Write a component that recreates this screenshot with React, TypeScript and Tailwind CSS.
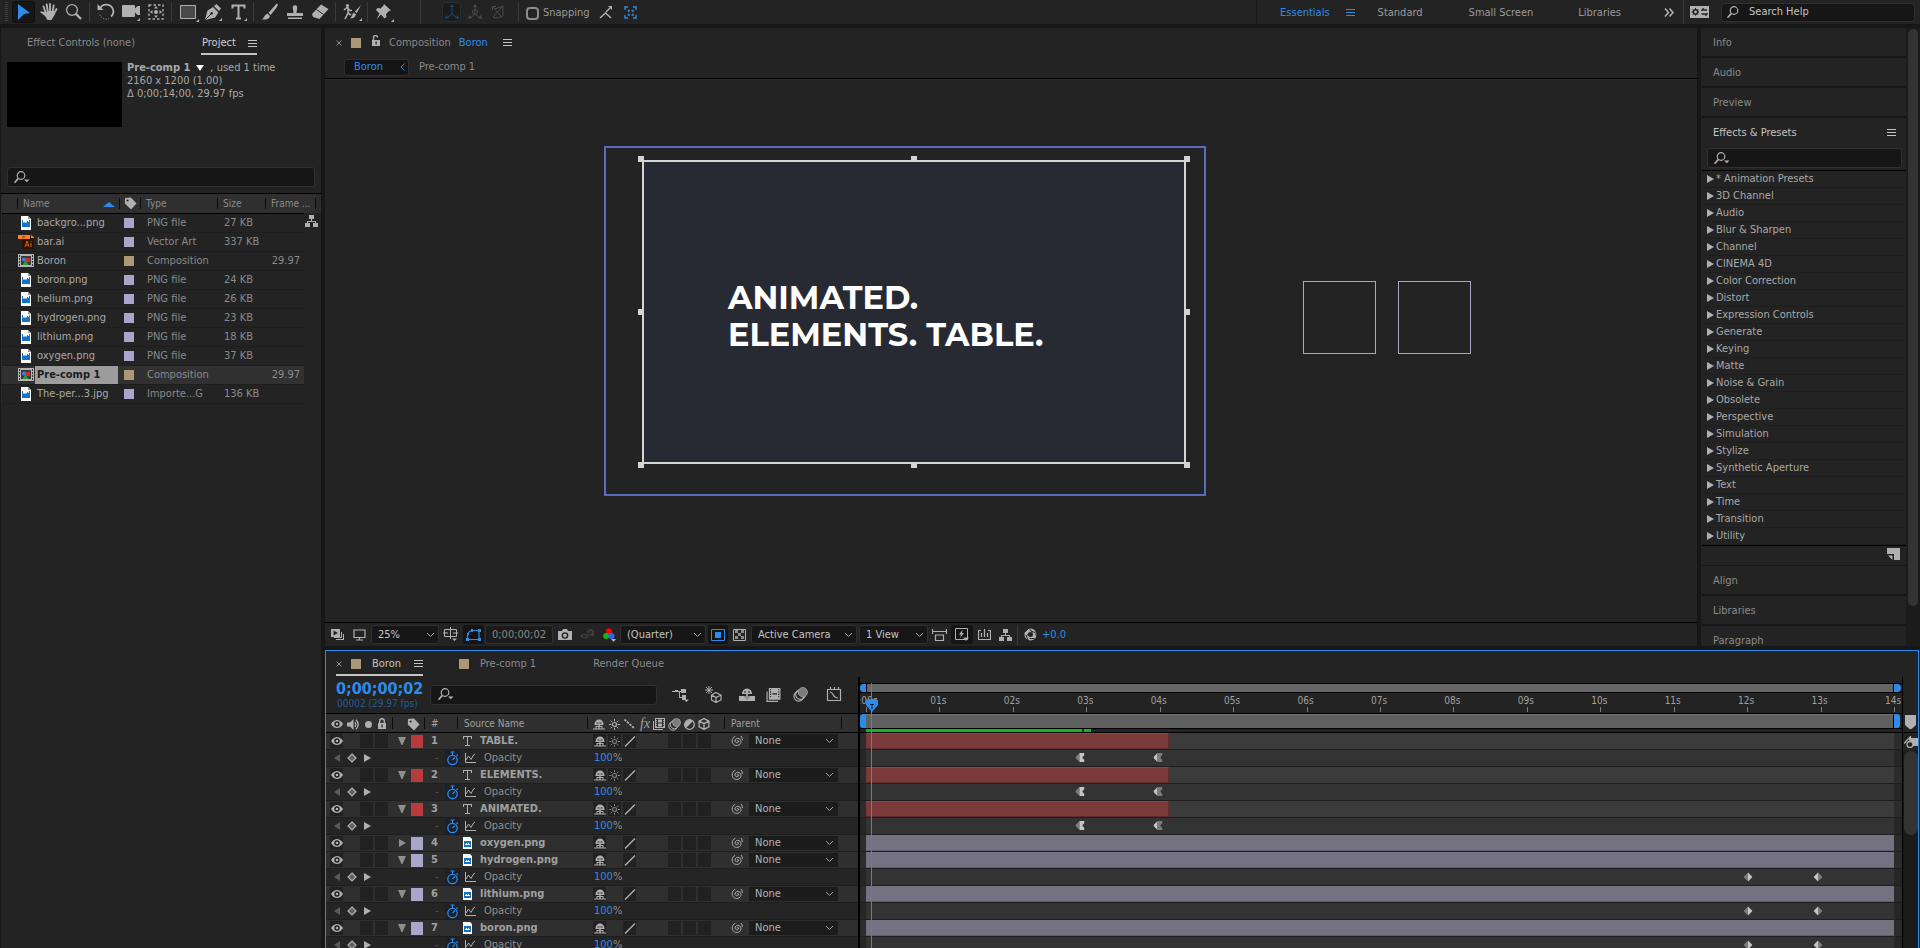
import React from "react";

type P = { children?: React.ReactNode };

const BLUE = "#2d8ceb";
const GREY = "#b0b0b0";

/* ---------- icons ---------- */

function Ico({ w = 16, h = 16, vb, c = GREY, children }: P & { w?: number; h?: number; vb?: string; c?: string }) {
  return (
    <svg width={w} height={h} viewBox={vb ?? `0 0 ${w} ${h}`} fill={c} stroke="none" color={c} aria-hidden="true" className="shrink-0">
      {children}
    </svg>
  );
}

const line = { fill: "none", stroke: "currentColor", strokeWidth: 1 };

const Hamburger = ({ c = "#c4c4c4" }: { c?: string }) => (
  <Ico w={9} h={7} c={c}>
    <path d="M0 0h9v1H0zM0 3h9v1H0zM0 6h9v1H0z" />
  </Ico>
);
const Chevron = () => (
  <Ico w={9} h={6} c="#a0a0a0">
    <path d="M1 1l3.5 3.5L8 1" {...line} />
  </Ico>
);
const Loupe = ({ menu = true }: { menu?: boolean }) => (
  <Ico w={18} h={13}>
    <circle cx="8" cy="4.500" r="3.800" {...line} strokeWidth={1.200} />
    <path d="M5.400 7.400L1.500 11.800" {...line} strokeWidth={1.600} />
    {menu && <path d="M11 8.500h5.500l-2.700 2.800z" />}
  </Ico>
);
const Eye = () => (
  <Ico w={12} h={8}>
    <path d="M0 4C2 1 4 0 6 0s4 1 6 4C10 7 8 8 6 8S2 7 0 4z" />
    <circle cx="6" cy="4" r="2.700" fill="#1d1d1d" />
    <circle cx="6" cy="4" r="1.300" />
  </Ico>
);
const Speaker = () => (
  <Ico w={13} h={11}>
    <path d="M0 3.500h3L6.500 0v11L3 7.500H0z" />
    <path d="M8 3q1.500 2.500 0 5M9 .8q4.500 4.700 0 9.400" {...line} strokeWidth={1.300} />
  </Ico>
);
const Lock = ({ open = false }: { open?: boolean }) => (
  <Ico w={10} h={12}>
    <path d="M1 5h8v6H1z" />
    <path d={open ? "M2.500 5V2.500a2 2 0 0 1 4 0" : "M2.700 5V3a2.300 2.300 0 0 1 4.600 0v2"} {...line} strokeWidth={1.400} />
    <path d="M4.500 6.500h1.200v3H4.500z" fill="#222" />
  </Ico>
);
const Tag = () => (
  <Ico w={13} h={13}>
    <path d="M1 1l6-.5 5.500 6-5.500 6L.8 6.500z" />
    <circle cx="3.600" cy="3.500" r="1.100" fill="#2b2b2b" />
  </Ico>
);
const Shy = () => (
  <Ico w={12} h={11}>
    <path d="M1.500 6V5.500a4.500 5 0 0 1 9 0V6z" />
    <path d="M3.500 3.500h2v1h-2zM6.500 3.500h2v1h-2z" fill="#232323" />
    <path d="M5.300 6h1.400v4H5.300zM2.500 7h7v1h-7zM0 9.500h12v1H0zM2.500 7h1v3h-1zM8.500 7h1v3h-1z" />
  </Ico>
);
const Sun = ({ c = GREY }: { c?: string }) => (
  <Ico w={11} h={11} c={c}>
    <circle cx="5.500" cy="5.500" r="2" {...line} strokeWidth={1.200} />
    <path d="M5.500 0v2.300M5.500 8.700V11M0 5.500h2.300M8.700 5.500H11M1.600 1.600l1.600 1.600M7.800 7.800l1.600 1.600M9.400 1.600L7.800 3.200M3.200 7.800L1.600 9.400" {...line} />
  </Ico>
);
const Slash = () => (
  <Ico w={12} h={11}>
    <path d="M1 10.500L11 .5" {...line} strokeWidth={1.400} />
  </Ico>
);
const Dots = () => (
  <Ico w={11} h={10}>
    <path d="M.5 .5l10 9" {...line} strokeWidth={1.800} strokeDasharray="2.400 1" />
  </Ico>
);
const Film = () => (
  <Ico w={12} h={12}>
    <path d="M0 3h1v8h9v1H0zM2 0h10v10H2z" />
    <path d="M4 1h6v8H4z" fill="#2b2b2b" />
    <path d="M3 1h1v1H3zM3 3h1v1H3zM3 5h1v1H3zM3 7h1v1H3zM10 1h1v1h-1zM10 3h1v1h-1zM10 5h1v1h-1zM10 7h1v1h-1z" fill="#2b2b2b" />
    <path d="M5 1.500h4v3H5zM5 5.500h4v3H5z" />
  </Ico>
);
const Blur = ({ s = 13 }: { s?: number }) => (
  <Ico w={s} h={s} vb="0 0 13 13">
    <circle cx="5" cy="8" r="4.200" {...line} />
    <circle cx="6.500" cy="6.500" r="4.200" {...line} />
    <circle cx="8.500" cy="4.500" r="4" fill="#7c7c7c" stroke="#9c9c9c" strokeWidth={0.800} />
  </Ico>
);
const Adjust = () => (
  <Ico w={11} h={11}>
    <circle cx="5.500" cy="5.500" r="4.800" {...line} strokeWidth={1.300} />
    <path d="M9 2A5 5 0 0 0 2 9z" />
  </Ico>
);
const Cube = ({ s = 12 }: { s?: number }) => (
  <Ico w={s} h={s} vb="0 0 11 11">
    <path d="M5.500 .6l4.500 2.300v5.200L5.500 10.400 1 8.100V2.900zM1 2.900l4.500 2.300L10 2.900M5.500 5.200v5.200" {...line} strokeWidth={1.200} />
  </Ico>
);
const Swirl = () => (
  <Ico w={12} h={12}>
    <path d="M6.200 6.400C5.600 5.400 7.600 5 7.700 6.300 7.800 8 4.500 8.400 4.100 6.300 3.700 3.900 6.200 2.700 8.200 3.700 10.800 5 10.400 8.600 8 9.900 5 11.500 1.400 9.600 1.200 6.200 1.100 4 2.300 2.200 4.200 1.300M10 1q1.400 1.500 1.300 4" {...line} />
  </Ico>
);
const Stopwatch = () => (
  <Ico w={13} h={15} c={BLUE}>
    <circle cx="6.500" cy="9" r="4.700" {...line} strokeWidth={1.300} />
    <path d="M4.500 1h4M6.500 1v3M10.500 3.500l1.300 1.300M6.500 9l2.500-2.500" {...line} strokeWidth={1.200} />
  </Ico>
);
const GraphIcon = () => (
  <Ico w={12} h={11}>
    <path d="M1.500 0v9.500H12M2 7l2.500-4 2.500 3.500L9.500 2 11 1" {...line} />
  </Ico>
);
const Tri = ({ dir, c = GREY }: { dir: "r" | "l" | "d"; c?: string }) => (
  <Ico w={8} h={8} c={c}>
    <path d={dir === "r" ? "M1 0v8l7-4z" : dir === "l" ? "M7 0v8L1 4z" : "M0 0h8L4.500 8h-1z"} />
  </Ico>
);
const KeyDiamond = () => (
  <Ico w={10} h={10}>
    <path d="M5 1l4 4-4 4-4-4z" fill="#5f5f5f" stroke="#b0b0b0" strokeWidth={1.200} />
  </Ico>
);
const PngIcon = () => (
  <Ico w={10} h={14}>
    <path d="M0 0h7l3 3v11H0z" fill="#fff" />
    <path d="M7 0v3h3z" fill="#9a9a9a" />
    <path d="M1 4h1v2l1 1 1-1 1 1 1-1V5h1v1h1V4h1v7H1z" fill="#1473c8" />
  </Ico>
);
const PngSmall = () => (
  <Ico w={9} h={12}>
    <path d="M0 0h7l2 2v10H0z" fill="#fff" />
    <path d="M1 4h7v6H1z" fill="#1473c8" />
    <path d="M2 8V7h1V6h1v1h1V6h1v1h1v1z" fill="#fff" />
  </Ico>
);
const AiIcon = () => (
  <Ico w={16} h={14}>
    <path d="M4 1h12v13H4z" fill="#2a1205" />
    <path d="M0 0h12v4H0zM13 0l3 2v1h-3z" fill="#ff7f18" />
    <path d="M4 1.500h3v1H4z" fill="#7a3400" />
    <path d="M7 12l2-6 2 6M7.800 10h2.500M13 8v4M13 6v1" {...line} stroke="#d7600d" />
  </Ico>
);
const CompIcon = () => (
  <Ico w={16} h={13}>
    <path d="M0 0h16v13H0z" fill="#b4b4b4" />
    <path d="M3 2h10v9H3z" fill="#3a3a3a" />
    <path d="M1 1h1v2H1zM1 4h1v2H1zM1 7h1v2H1zM1 10h1v2H1zM14 1h1v2h-1zM14 4h1v2h-1zM14 7h1v2h-1zM14 10h1v2h-1z" fill="#333" />
    <path d="M8 4h4v4H8z" fill="#d42a2a" />
    <circle cx="6" cy="5.500" r="2" fill="#3f7fe0" />
    <path d="M7.500 6l3 5h-6z" fill="#2a9a38" />
  </Ico>
);
const Flow = () => (
  <Ico w={13} h={12}>
    <path d="M4 0h5v4H4zM6 4h1v2H6zM2 6h9v1H2zM2 6h1v2H2zM10 6h1v2h-1zM0 8h5v4H0zM8 8h5v4H8z" />
  </Ico>
);
const Cross = () => (
  <Ico w={6} h={6} c="#8a8a8a">
    <path d="M.500 .500l5 5M5.500 .500l-5 5" {...line} />
  </Ico>
);

/* ---------- toolbar ---------- */

const Corner = () => <path d="M17 20h3v-3z" />;

const toolGroups: { name: string; art: React.ReactNode; on?: boolean }[][] = [
  [
    { name: "Selection", on: true, art: <path d="M5 3l12 9-6 1-6 6z" fill={BLUE} /> },
    {
      name: "Hand",
      art: (
        <>
          <path d="M6.500 11l3.500 0v-1h7l-.5 4-3 5H9.500L7 15 2 11l1-.8z" />
          <path d="M7.800 12L5.500 5.500M9.800 11L8.700 3.500M12 11V3M14.500 11l1.200-6.500M15.800 13L18.500 8" {...line} strokeWidth={1.900} strokeLinecap="round" />
        </>
      ),
    },
    {
      name: "Zoom",
      art: (
        <>
          <circle cx="9" cy="9" r="5.400" {...line} strokeWidth={1.300} />
          <path d="M13 13l5 5" {...line} strokeWidth={2.400} />
        </>
      ),
    },
  ],
  [
    {
      name: "Rotate",
      art: (
        <>
          <path d="M5 7.500A7 7 0 0 1 18 8.500a6.500 6.500 0 0 1-2 7" {...line} strokeWidth={1.700} />
          <path d="M2.500 3v6h6z" />
          <path d="M14 17.500a7 7 0 0 1-9.500-4.500" {...line} strokeDasharray="1 1.500" />
        </>
      ),
    },
    {
      name: "Camera",
      art: (
        <>
          <path d="M3 4h11q1 0 1 1v2.500l2.500-2.500H20v9h-2.500L15 11.500V15q0 1-1 1H3q-1 0-1-1V5q0-1 1-1z" />
          <Corner />
        </>
      ),
    },
    {
      name: "Pan Behind",
      art: (
        <>
          <path d="M4 4h14v14H4z" {...line} strokeWidth={1.300} strokeDasharray="2.500 2" />
          <path d="M11 5l2 2.500H9zM11 17l2-2.500H9zM5 11l2.500-2v4zM17 11l-2.500-2v4z" />
          <circle cx="11" cy="11" r="2" />
        </>
      ),
    },
  ],
  [
    {
      name: "Rectangle",
      art: (
        <>
          <path d="M3.500 4.500h15v13h-15z" fill="#4a4a4a" stroke="#b0b0b0" />
          <path d="M19 21h3v-3z" />
        </>
      ),
    },
    {
      name: "Pen",
      art: (
        <>
          <path d="M3 18.500l2.500-9L11 6l5.500 5.500L13 16.500l-9.500 2.500 5-5.500zM12 5l2.500-2 4.500 4.500-2 2.500z" />
          <circle cx="9.700" cy="12.300" r="1.200" fill="#232323" />
          <path d="M9 13l-5 5" {...line} stroke="#232323" />
          <Corner />
        </>
      ),
    },
    {
      name: "Type",
      art: (
        <>
          <path d="M5 4.500h13M11.500 4.500v12.500M9 17.500h5M5.500 3.500v4M17.500 3.500v4" {...line} strokeWidth={2} />
          <Corner />
        </>
      ),
    },
  ],
  [
    { name: "Brush", art: <path d="M19 3l-1.500-.3-8 9 2.200 2.200L18 6zM8.500 12.500l2.500 2.500c-.5 3-4 4-8 3.500 2-1 2-4.500 5.500-6z" /> },
    { name: "Clone Stamp", art: <path d="M9 8C7 3 15 3 13 8l-.5 4H19v3H3v-3h6.500zM4 16.500h14V18H4z" /> },
    {
      name: "Eraser",
      art: (
        <>
          <path d="M3 13l9-9.500L19.500 8l-9 10L4 16z" />
          <path d="M7.500 8.500l7 5" {...line} stroke="#232323" />
        </>
      ),
    },
  ],
  [
    {
      name: "Roto Brush",
      art: (
        <>
          <circle cx="6.500" cy="4.500" r="1.600" />
          <path d="M7 6v6l-3 6M7 12l3 2M3 9l3-2.500 3 3 2 0" {...line} strokeWidth={1.600} />
          <path d="M20 4l-6 6.500 1.800 1.800zM13 11.500l2 2c-1 3-3 4-6 4 2-1.500 2-4.500 4-6z" />
          <path d="M18 20h3v-3z" />
        </>
      ),
    },
  ],
  [
    {
      name: "Puppet Pin",
      art: (
        <>
          <path d="M11 3l7 6.500-2 .5-3 3 .5 3-2 1.500-3.500-4-4.500 5 3-6-3.500-3.500 1.500-2 3 .5 3-3z" />
          <path d="M18 21h3v-3z" />
        </>
      ),
    },
  ],
];

const VSep = () => <span className="mx-[3px] h-5 w-px shrink-0 bg-[#383838]" />;

function Toolbar() {
  return (
    <header className="flex h-7 shrink-0 items-center border-b-4 border-[#171717] bg-[#232323] text-[#9a9a9a]">
      <span className="ml-[5px] mr-[3px] h-5 w-[3px] shrink-0 bg-[repeating-linear-gradient(#3d3d3d_0_1px,transparent_1px_2px)]" />
      {toolGroups.map((g, i) => (
        <div key={i} className="flex shrink-0 items-center">
          {g.map((t) => (
            <button
              key={t.name}
              aria-label={`${t.name} tool`}
              className={
                t.on
                  ? "mx-px flex h-[22px] w-[23px] items-center justify-center rounded-[3px] border border-[#101010] bg-[#161616]"
                  : "flex h-[22px] w-[25px] items-center justify-center"
              }
            >
              <Ico w={22} h={22}>{t.art}</Ico>
            </button>
          ))}
          {i < toolGroups.length - 1 && <VSep />}
        </div>
      ))}
      <span className="ml-6 h-6 w-px shrink-0 bg-[#383838]" />
      <div className="ml-[21px] flex items-center gap-[6px]">
        <button aria-label="Local axis" className="flex h-5 w-[19px] items-center justify-center rounded-sm border border-[#2c2c2c] bg-[#1b1b1b]">
          <Ico w={14} h={16} c="#1b4672">
            <path d="M7 2v8M7 10l-5 4M7 10l5 4" {...line} />
            <path d="M7 0l2 3H5zM0 15l1-4 3 3zM14 15l-1-4-3 3z" />
          </Ico>
        </button>
        <button aria-label="World axis">
          <Ico w={16} h={16} c="#4b4b4b">
            <path d="M8 2v8M8 10l-5 4M8 10l5 4" {...line} />
            <circle cx="8" cy="8" r="2.500" {...line} />
            <path d="M8 0l2 3H6zM1 15l1-4 3 3zM15 15l-1-4-3 3z" />
          </Ico>
        </button>
        <button aria-label="View axis">
          <Ico w={18} h={16} c="#4b4b4b">
            <path d="M6 5l8-3v10l-6 2-4-1M4 3l9 10M4 13l10-11M3.500 6V2.500H7" {...line} />
          </Ico>
        </button>
      </div>
      <span className="ml-[11px] h-5 w-px shrink-0 bg-[#383838]" />
      <label className="ml-[7px] flex items-center gap-[4px] pt-[2px]">
        <input type="checkbox" className="size-[13px] appearance-none rounded-sm border-2 border-[#8c8c8c]" />
        Snapping
      </label>
      <button aria-label="Snap edges" className="ml-[9px]">
        <Ico w={14} h={14}>
          <path d="M1 13l5.500-5 5.500 5M7 7l4-4" {...line} strokeWidth={1.400} />
          <path d="M9 1h4v4z" />
        </Ico>
      </button>
      <button aria-label="Snap features" className="ml-[11px]">
        <Ico w={13} h={13} c={BLUE}>
          <path d="M1 4V1h3M9 1h3v3M12 9v3H9M4 12H1V9M4.500 6V4.500H6M7.500 4.500H9V6M9 7.500V9H7.500M6 9H4.500V7.500" {...line} strokeWidth={1.400} />
        </Ico>
      </button>
      <nav className="ml-auto flex h-full items-center">
        <span className="h-6 w-px bg-[#171717]" />
        <a href="#essentials" className="ml-[23px] pt-[2px] text-[#2d8ceb]">Essentials</a>
        <button aria-label="Workspace menu" className="ml-4">
          <Hamburger c={BLUE} />
        </button>
        <a href="#standard" className="ml-[23px] pt-[2px]">Standard</a>
        <a href="#small" className="ml-[46px] pt-[2px]">Small Screen</a>
        <a href="#libraries" className="ml-[45px] pt-[2px]">Libraries</a>
        <button aria-label="More workspaces" className="ml-[43px]">
          <Ico w={10} h={9}>
            <path d="M1 .500l3.500 4L1 8.500M5.500 .500L9 4.500 5.500 8.500" {...line} strokeWidth={1.600} />
          </Ico>
        </button>
        <span className="ml-[9px] h-6 w-px bg-[#383838]" />
        <button aria-label="Sync settings" className="ml-[6px]">
          <Ico w={19} h={12}>
            <path d="M0 0h19v12H0z" />
            <circle cx="5.500" cy="6" r="2.200" fill="none" stroke="#232323" strokeWidth={1.600} />
            <path d="M5.500 2v8M1.500 6h8M2.700 3.200l5.600 5.600M8.300 3.200L2.700 8.800" stroke="#232323" strokeWidth={1} strokeDasharray="1.300 5" />
            <path d="M17 4h-5l1.500-1.800M11.500 8H17l-1.500 1.800" fill="none" stroke="#232323" strokeWidth={1.300} />
          </Ico>
        </button>
        <label className="ml-3 mr-[5px] flex h-[19px] w-[194px] items-center gap-[5px] rounded-[3px] border border-[#303030] bg-[#161616] pl-1">
          <Loupe menu={false} />
          <input aria-label="Search help" placeholder="Search Help" className="w-full min-w-0 bg-transparent outline-none placeholder:text-[#c4c4c4]" />
        </label>
      </nav>
    </header>
  );
}

/* ---------- project panel ---------- */

const project = [
  ["png", "backgro...png", "l", "PNG file", "27 KB", ""],
  ["ai", "bar.ai", "l", "Vector Art", "337 KB", ""],
  ["comp", "Boron", "t", "Composition", "", "29.97"],
  ["png", "boron.png", "l", "PNG file", "24 KB", ""],
  ["png", "helium.png", "l", "PNG file", "26 KB", ""],
  ["png", "hydrogen.png", "l", "PNG file", "23 KB", ""],
  ["png", "lithium.png", "l", "PNG file", "18 KB", ""],
  ["png", "oxygen.png", "l", "PNG file", "37 KB", ""],
  ["comp", "Pre-comp 1", "t", "Composition", "", "29.97"],
  ["png", "The-per...3.jpg", "l", "Importe...G", "136 KB", ""],
];

const HeadBar = () => <span className="absolute right-0 top-1 h-[11px] w-px bg-[#0c0c0c]" />;

function ProjectPanel() {
  return (
    <section className="flex w-80 shrink-0 flex-col bg-[#232323]">
      <div className="flex h-[27px] items-end pl-[26px]">
        <button className="h-5 pb-1 text-[#8a8a8a]">Effect Controls (none)</button>
        <button className="ml-auto mr-16 flex h-[22px] w-14 items-center justify-between border-b-2 border-[#c4c4c4] pl-px text-[#d0d0d0]">
          Project <Hamburger />
        </button>
      </div>
      <div className="mt-[7px] flex gap-[5px] pl-[6px]">
        <div className="h-[65px] w-[115px] bg-black" />
        <div className="-mt-px leading-[13px] text-[#a8a8a8]">
          <p className="flex items-center gap-[6px] whitespace-nowrap">
            <b>Pre-comp 1</b>
            <Ico w={8} h={6} c="#fff"><path d="M0 0h8L4 6z" /></Ico>
            <span>, used 1 time</span>
          </p>
          <p>2160 x 1200 (1.00)</p>
          <p>Δ 0;00;14;00, 29.97 fps</p>
        </div>
      </div>
      <label className="ml-[6px] mr-[6px] mt-10 flex h-5 items-center rounded-[3px] border border-[#303030] bg-[#161616] pl-[5px]">
        <Loupe />
        <input aria-label="Search project" className="w-full min-w-0 bg-transparent outline-none" />
      </label>
      <div className="mt-[6px] flex border-t border-black bg-[#2b2b2b] pl-px">
        <table className="w-[314px] table-fixed border-collapse text-left text-[#8a8a8a]">
          <colgroup>
            <col className="w-4" />
            <col className="w-[102px]" />
            <col className="w-[21px]" />
            <col className="w-[77px]" />
            <col className="w-12" />
            <col />
          </colgroup>
          <thead>
            <tr className="h-[19px] border-b border-black bg-[#2f2f2f] text-[10px] leading-4">
              <th className="relative p-0 font-normal"><HeadBar /></th>
              <th className="relative p-0 pl-[5px] pt-[2px] font-normal">
                <span className="flex items-center justify-between pr-[5px]">
                  Name
                  <Ico w={12} h={5} c={BLUE}><path d="M6 0l6 5H0z" /></Ico>
                </span>
                <HeadBar />
              </th>
              <th className="relative p-0 pl-1 font-normal" aria-label="Label"><Tag /><HeadBar /></th>
              <th className="relative p-0 pl-[5px] pt-[2px] font-normal">Type<HeadBar /></th>
              <th className="relative p-0 pl-[5px] pt-[2px] font-normal">Size<HeadBar /></th>
              <th className="relative whitespace-nowrap p-0 pl-[5px] pt-[2px] font-normal">Frame ...<HeadBar /></th>
            </tr>
          </thead>
          <tbody>
            {project.map(([kind, name, sw, type, size, fps]) => {
              const sel = name === "Pre-comp 1";
              return (
                <tr key={name} className={sel ? "h-[19px] border-b border-[#1e1e1e] bg-[#313131]" : "h-[19px] border-b border-[#1e1e1e] bg-[#232323]"}>
                  <td colSpan={2} className="p-0">
                    <span className="flex h-[18px] items-center">
                      <span className="flex w-[33px] items-center justify-end gap-px pr-px">
                        {kind === "png" ? <span className="pr-[3px]"><PngIcon /></span> : kind === "ai" ? <AiIcon /> : <CompIcon />}
                      </span>
                      <span className={sel ? "h-[18px] w-[83px] bg-[#9c9c9c] pl-[2px] font-bold leading-[18px] text-[#1c1c1c]" : "pl-[2px] leading-[18px] text-[#a8a8a8]"}>{name}</span>
                    </span>
                  </td>
                  <td className="p-0 pl-1">
                    <span className={sw === "l" ? "block size-[10px] bg-[#a9a6cb]" : "block size-[10px] bg-[#ab9877]"} />
                  </td>
                  <td className="p-0 pl-[6px] leading-[18px]">{type}</td>
                  <td className="p-0 pl-[6px] leading-[18px]">{size}</td>
                  <td className="p-0 pr-[16px] text-right leading-[18px]">{fps}</td>
                </tr>
              );
            })}
          </tbody>
        </table>
        <div className="-ml-3 flex w-[17px] flex-col">
          <div className="h-[19px]" />
          <div className="z-10 flex-1 bg-[#232323] pl-px pt-[2px]"><Flow /></div>
        </div>
      </div>
      <div className="flex-1" />
    </section>
  );
}

/* ---------- composition panel ---------- */

const Handle = ({ at }: { at: string }) => <span className={`absolute size-[6px] bg-[#d4d4d4] ${at}`} />;

const Drop = ({ label, value, w }: { label: string; value: string; w: string }) => (
  <label className={`relative flex h-[19px] shrink-0 items-center rounded-[3px] border border-[#303030] bg-[#161616] ${w}`}>
    <select aria-label={label} className="w-full appearance-none bg-transparent pl-[6px] text-[#c4c4c4] outline-none">
      <option>{value}</option>
    </select>
    <span className="pointer-events-none absolute right-[3px]"><Chevron /></span>
  </label>
);

const IconBtn = ({ label, w, on, children }: P & { label: string; w: string; on?: boolean }) => (
  <button
    aria-label={label}
    className={on ? `flex h-[19px] shrink-0 items-center justify-center rounded-[3px] bg-[#141414] ${w}` : `flex h-[19px] shrink-0 items-center justify-center ${w}`}
  >
    {children}
  </button>
);

function CompPanel() {
  return (
    <section className="flex min-w-0 flex-1 flex-col bg-[#232323]">
      <div className="flex h-[27px] items-center pl-[11px] pt-[2px] text-[#8a8a8a]">
        <button aria-label="Close tab" className="w-[6px]"><Cross /></button>
        <span className="ml-[9px] size-[10px] bg-[#ab9877]" />
        <span className="ml-[10px] pb-[3px]"><Lock open /></span>
        <h2 className="ml-[8px] flex gap-2">Composition <span className="text-[#2d8ceb]">Boron</span></h2>
        <button aria-label="Panel menu" className="ml-[15px]"><Hamburger /></button>
      </div>
      <div className="flex h-6 items-center border-b border-black pt-px pl-[19px] text-[#8a8a8a]">
        <button className="flex h-[17px] w-[65px] items-center justify-between rounded-[3px] border border-[#303030] bg-[#141414] pl-[9px] pr-[3px] text-[#2d8ceb]">
          Boron
          <Ico w={5} h={8} c={BLUE}><path d="M4.500 .500l-3.500 3.500 3.500 3.500" {...line} /></Ico>
        </button>
        <button className="ml-[10px]">Pre-comp 1</button>
      </div>
      <div className="relative min-h-0 flex-1 overflow-hidden border-t border-[#2c2c2c]">
        <div className="absolute left-[279px] top-[66px] h-[350px] w-[602px] border-2 border-[#5a6bbd]" />
        <div className="absolute left-[317px] top-[80px] h-[304px] w-[544px] border-2 border-[#d4d4d4] bg-[#272a32]">
          <Handle at="-left-[6px] -top-[6px]" />
          <Handle at="left-[267px] -top-[6px]" />
          <Handle at="-right-[6px] -top-[6px]" />
          <Handle at="-left-[6px] top-[147px]" />
          <Handle at="-right-[6px] top-[147px]" />
          <Handle at="-left-[6px] -bottom-[6px]" />
          <Handle at="left-[267px] -bottom-[6px]" />
          <Handle at="-right-[6px] -bottom-[6px]" />
          <p className="absolute left-[84px] top-[117px] whitespace-nowrap font-['Montserrat',Inter,sans-serif] text-[32px] font-bold leading-[37px] text-white">
            ANIMATED.
            <br />
            ELEMENTS. TABLE.
          </p>
        </div>
        <div className="absolute left-[978px] top-[201px] size-[73px] border border-[#a9a6cb]" />
        <div className="absolute left-[1073px] top-[201px] size-[73px] border border-[#a9a6cb]" />
      </div>
      <div className="flex h-6 shrink-0 items-center border-t border-black">
        <IconBtn label="Always preview" w="w-[25px]">
          <Ico w={13} h={12}><path d="M0 0h9v8H0zM10 3h1v6H3V8h7zM12 5h1v6H5v-1h7z" /><path d="M2.500 1.500v5l4.500-2.500z" fill="#232323" /></Ico>
        </IconBtn>
        <IconBtn label="Main viewer" w="w-[19px]">
          <Ico w={13} h={12}><path d="M1 1h11v7.500H1zM3 11h7M6.500 9v2" {...line} strokeWidth={1.200} /></Ico>
        </IconBtn>
        <span className="w-[2px]" />
        <Drop label="Magnification" value="25%" w="w-[68px]" />
        <IconBtn label="Grid and guides" w="w-[24px]">
          <Ico w={16} h={15}><path d="M1.500 2.500h12v7h-12zM7.500 0v12M0 6h5M10 6h5" {...line} /><path d="M9 11.500h5l-2.500 2.500z" /></Ico>
        </IconBtn>
        <IconBtn label="Toggle mask" w="w-[21px]" on>
          <Ico w={15} h={13} c={BLUE}>
            <path d="M1.500 11.500V7Q3 2.500 6.500 2.500h6.500v9z" {...line} strokeWidth={1.200} />
            <path d="M0 10h3v3H0zM1 5h2v2H1zM5 1h2v3H5zM12 1h3v3h-3zM12 10h3v3h-3z" />
          </Ico>
        </IconBtn>
        <button className="ml-px h-[19px] w-[68px] shrink-0 rounded-[3px] border border-[#303030] bg-[#1b1b1b] text-[#8a8a8a]">0;00;00;02</button>
        <IconBtn label="Snapshot" w="w-[23px]">
          <Ico w={14} h={12}><path d="M0 2h4l1-2h4l1 2h4v9H0z" /><circle cx="7" cy="6.500" r="2.600" fill="none" stroke="#232323" strokeWidth={1.400} /></Ico>
        </IconBtn>
        <IconBtn label="Show snapshot" w="w-[22px]">
          <Ico w={14} h={13} c="#3e3e3e"><path d="M0 8q5-5 9 0-4 5-9 0M6 3h2l1-2h3l2 2v5h-3" /><circle cx="4.500" cy="8" r="1.500" fill="#232323" /><circle cx="10.500" cy="4.500" r="1.500" fill="#232323" /></Ico>
        </IconBtn>
        <IconBtn label="Channels" w="w-[22px]">
          <Ico w={13} h={14}><circle cx="6" cy="3.200" r="3" fill="#f00" /><circle cx="3.200" cy="8" r="3" fill="#12b812" /><circle cx="8.500" cy="8" r="3" fill="#3a5cff" /><path d="M8 11h5l-2.500 3z" /></Ico>
        </IconBtn>
        <Drop label="Resolution" value="(Quarter)" w="w-[86px]" />
        <span className="w-[2px]" />
        <IconBtn label="Region of interest" w="w-[20px]" on>
          <Ico w={14} h={12} c={BLUE}><path d="M.5 .500h13v11H.5z" {...line} /><path d="M4 3h6v6H4z" /></Ico>
        </IconBtn>
        <IconBtn label="Transparency grid" w="w-[23px]">
          <Ico w={13} h={12}><path d="M.5 .500h12v11H.5z" {...line} /><path d="M2 1h3v3H2zM8 1h3v3H8zM5 4h3v3H5zM2 7h3v3H2zM8 7h3v3H8z" fill="#8c8c8c" /></Ico>
        </IconBtn>
        <Drop label="3D view" value="Active Camera" w="w-[106px]" />
        <span className="w-[2px]" />
        <Drop label="View layout" value="1 View" w="w-[69px]" />
        <IconBtn label="Pixel aspect" w="w-[23px]">
          <Ico w={15} h={12}><path d="M.5 0v5M14.500 0v5M1 2.500h13M3.500 6h8v5.500h-8z" {...line} strokeWidth={1.200} /></Ico>
        </IconBtn>
        <IconBtn label="Fast previews" w="w-[22px]" on>
          <Ico w={14} h={13}><path d="M.5 .500h12v11H.5z" {...line} /><path d="M7.500 2L4 6.500h2L5 10l4-5H7zM8 9.500h6L11 13z" /></Ico>
        </IconBtn>
        <IconBtn label="Timeline" w="w-[23px]">
          <Ico w={13} h={12}><path d="M3 1.500H.5v9h12v-9H10M3.500 4v4M6.500 0v8M9.500 4v4" {...line} strokeWidth={1.200} /></Ico>
        </IconBtn>
        <IconBtn label="Flowchart" w="w-[18px]"><Flow /></IconBtn>
        <VSep />
        <IconBtn label="Reset exposure" w="w-[19px]">
          <Ico w={13} h={13}>
            <circle cx="6.500" cy="6.500" r="4.300" {...line} strokeWidth={3.600} />
            <path d="M5 .500l4 4M12 3v5M10.500 10.500H5.500M4 12L2 7M1 4l3-3M6.500 3L11 4.500M2.500 8l2.500-3" stroke="#232323" strokeWidth={0.900} />
          </Ico>
        </IconBtn>
        <button className="ml-[2px] text-[#2d8ceb]">+0.0</button>
      </div>
    </section>
  );
}

/* ---------- right column ---------- */

const effects = [
  "* Animation Presets", "3D Channel", "Audio", "Blur & Sharpen", "Channel", "CINEMA 4D", "Color Correction", "Distort",
  "Expression Controls", "Generate", "Keying", "Matte", "Noise & Grain", "Obsolete", "Perspective", "Simulation", "Stylize",
  "Synthetic Aperture", "Text", "Time", "Transition", "Utility",
];

const Fold = ({ children }: P) => (
  <button className="flex h-[30px] w-full shrink-0 items-center border-b-2 border-[#171717] pl-[11px] pt-px text-[#8a8a8a]">{children}</button>
);

function SidePanel() {
  return (
    <aside className="flex w-[219px] shrink-0 overflow-hidden bg-[#1b1b1b]">
      <div className="flex w-[205px] flex-col bg-[#232323] pl-px">
        {["Info", "Audio", "Preview"].map((t) => <Fold key={t}>{t}</Fold>)}
        <h2 className="flex h-[30px] shrink-0 items-center justify-between pb-px pl-[11px] pr-[10px] text-[#c4c4c4]">
          Effects &amp; Presets <Hamburger />
        </h2>
        <label className="ml-[5px] mr-[4px] flex h-5 shrink-0 items-center rounded-[3px] border border-[#303030] bg-[#161616] pl-[5px]">
          <Loupe />
          <input aria-label="Search effects" className="w-full min-w-0 bg-transparent outline-none" />
        </label>
        <ul className="mt-[2px] shrink-0 border-y border-black text-[#a8a8a8]">
          {effects.map((e) => (
            <li key={e} className="h-[17px] border-b border-[#1e1e1e]">
              <button className="flex h-4 items-center gap-[2px] pl-1"><Tri dir="r" />{e}</button>
            </li>
          ))}
        </ul>
        <div className="flex h-5 shrink-0 justify-end border-b border-[#171717] pr-[6px] pt-[2px]">
          <button aria-label="New preset" className="h-3">
            <Ico w={13} h={12}><path d="M0 0h13v12H7V6H0z" /><path d="M1 7.500h4.500V12z" /></Ico>
          </button>
        </div>
        <Fold>Align</Fold>
        <Fold>Libraries</Fold>
        <Fold>Paragraph</Fold>
      </div>
      <div className="ml-[2px] mt-px h-[577px] w-[10px] rounded-full bg-[#333]" />
    </aside>
  );
}

/* ---------- timeline ---------- */

type Layer = { n: number; name: string; text?: boolean; open: boolean };
const layers: Layer[] = [
  { n: 1, name: "TABLE.", text: true, open: true },
  { n: 2, name: "ELEMENTS.", text: true, open: true },
  { n: 3, name: "ANIMATED.", text: true, open: true },
  { n: 4, name: "oxygen.png", open: false },
  { n: 5, name: "hydrogen.png", open: true },
  { n: 6, name: "lithium.png", open: true },
  { n: 7, name: "boron.png", open: true },
];

const grid = "grid grid-cols-[67px_32px_33px_130px_137px_117px_16px]";
const Well = ({ children, w = "w-[13px]" }: P & { w?: string }) => (
  <span className={`flex h-[14px] shrink-0 items-center justify-center bg-[#212121] ${w}`}>{children}</span>
);

function LayerRow({ l }: { l: Layer }) {
  return (
    <div className={`${grid} h-[17px] shrink-0 items-center border-b border-[#1e1e1e] bg-[#2f2f2f]`}>
      <div className="flex items-center gap-[2px] pl-[4px]">
        <Well><Eye /></Well>
        <span className="w-[13px]" />
        <Well />
        <Well />
      </div>
      <div className="flex items-center gap-1 pl-[5px]">
        <button aria-label="Twirl" className="w-[9px]"><Tri dir={l.open ? "d" : "r"} c="#8f8f8f" /></button>
        <span className={l.text ? "h-[13px] w-3 bg-[#b83a3a]" : "h-[13px] w-3 bg-[#a9a6cb]"} />
      </div>
      <span className="pl-[6px] font-bold text-[#a0a0a0]">{l.n}</span>
      <div className="flex items-center">
        <span className="flex w-[22px] items-center pl-[5px]">
          {l.text ? <Ico w={9} h={10}><path d="M0 0h9v3H8V1H5v8h2v1H2V9h2V1H1v2H0z" /></Ico> : <PngSmall />}
        </span>
        <b className="text-[#a0a0a0]">{l.name}</b>
      </div>
      <div className="flex items-center gap-[2px] pl-[5px]">
        <Well><Shy /></Well>
        {l.text ? <Well><Sun c="#7a7a7a" /></Well> : <span className="w-[13px]" />}
        <Well><Slash /></Well>
        <span className="w-7" />
        <Well />
        <Well />
        <Well />
      </div>
      <div className="flex items-center gap-[6px] pl-[6px]">
        <Swirl />
        <label className="relative flex h-[14px] w-[89px] items-center bg-[#1c1c1c]">
          <select aria-label={`Parent of ${l.name}`} className="w-full appearance-none bg-transparent pl-[6px] leading-[14px] text-[#b4b4b4] outline-none">
            <option>None</option>
          </select>
          <span className="pointer-events-none absolute right-1"><Chevron /></span>
        </label>
      </div>
    </div>
  );
}

function PropRow() {
  return (
    <div className={`${grid} h-[17px] shrink-0 items-center border-b border-[#1e1e1e] bg-[#252525]`}>
      <div className="flex items-center gap-[6px] pl-[7px]">
        <Tri dir="l" c="#5a5a5a" />
        <KeyDiamond />
        <Tri dir="r" />
      </div>
      <span />
      <span className="pl-[10px] text-[#555]">-</span>
      <div className="-ml-[13px] flex items-center text-[#8f8f8f]">
        <span className="flex h-4 w-[15px] items-center justify-center bg-[#1b2129]"><Stopwatch /></span>
        <span className="ml-1"><GraphIcon /></span>
        <span className="ml-2">Opacity</span>
      </div>
      <span className="pl-[6px] text-[#8f8f8f]"><span className="text-[#2d8ceb]">100</span>%</span>
    </div>
  );
}

const ColBar = () => <span className="absolute right-0 top-[3px] h-[12px] w-px bg-[#0c0c0c]" />;

const EaseKey = ({ x, flip }: { x: number; flip?: boolean }) => (
  <span className="absolute top-[3px] -translate-x-1/2" style={{ left: `${x}%` }}>
    <Ico w={9} h={9}>
      <path d="M4 0v9L0 5V4z" fill={flip ? "#c4c4c4" : "#7c7c7c"} />
      <path d="M4 0h5v2L7 4v1l2 2v2H4z" fill={flip ? "#7c7c7c" : "#c4c4c4"} />
    </Ico>
  </span>
);
const LinKey = ({ x, flip }: { x: number; flip?: boolean }) => (
  <span className="absolute top-[3px] -translate-x-1/2" style={{ left: `${x}%` }}>
    <Ico w={9} h={10}>
      <path d="M4.500 .500v9L0 5z" fill={flip ? "#c4c4c4" : "#7c7c7c"} />
      <path d="M4.500 .500v9L9 5z" fill={flip ? "#7c7c7c" : "#c4c4c4"} />
    </Ico>
  </span>
);

function Timeline() {
  return (
    <section className="mr-[1px] flex h-[298px] shrink-0 flex-col overflow-hidden border-x border-t border-[#2d8ceb] bg-[#232323]">
      <div className="flex h-[26px] shrink-0 items-end pb-px text-[#8a8a8a]">
        <button className="ml-[10px] flex h-6 w-[87px] items-center border-b-2 border-[#c4c4c4] pt-px text-[#c4c4c4]">
          <Cross />
          <span className="ml-[9px] size-[10px] bg-[#ab9877]" />
          <span className="ml-[11px] mr-auto">Boron</span>
          <Hamburger />
        </button>
        <button className="ml-9 flex h-6 items-center gap-[11px]"><span className="size-[10px] bg-[#ab9877]" />Pre-comp 1</button>
        <button className="ml-[57px] h-6">Render Queue</button>
      </div>
      <div className="flex min-h-0 flex-1">
        <div className="flex w-[534px] shrink-0 flex-col border-r-2 border-black">
          <div className="flex h-9 shrink-0 items-center pb-px pl-[10px]">
            <div className="w-[94px] shrink-0 text-[#2d8ceb]">
              <div className="text-[16px] font-bold leading-[18px]">0;00;00;02</div>
              <div className="pl-px text-[10px] leading-[12px] text-[#1f5c9a]">00002 (29.97 fps)</div>
            </div>
            <label className="flex h-5 w-[227px] shrink-0 items-center rounded-[3px] border border-[#303030] bg-[#161616] pl-[6px]">
              <Loupe />
              <input aria-label="Search layers" className="w-full min-w-0 bg-transparent outline-none" />
            </label>
            <div className="ml-[15px] flex shrink-0 items-center">
              <IconBtn label="Mini flowchart" w="w-[16px]">
                <Ico w={17} h={14}><path d="M0 3h3V2h3v1h3V1h5v4H9V4H0zM7 4h1v5h2V7h4v5h-4v-2H7z" /><path d="M12 11.500h5L14.500 14z" /></Ico>
              </IconBtn>
              <IconBtn label="Draft 3D" w="w-[50px]">
                <Ico w={17} h={17}><path d="M4 0v8M0 4h8M1 1l6 6M7 1L1 7" {...line} /><path d="M11 6.500l5 2.500v5l-5 2.500-4.500-2.500V9zM6.500 9l4.500 2.500L16 9M11 11.500v5" {...line} strokeWidth={1.200} /></Ico>
              </IconBtn>
              <IconBtn label="Hide shy layers" w="w-[18px]">
                <Ico w={16} h={13}>
                  <path d="M3 6a5 5.500 0 0 1 10 0H9v2h7v5H0V8h7V6z" />
                  <path d="M5 3.500h2v1H5zM9 3.500h2v1H9z" fill="#232323" />
                  <path d="M7.500 6h1v6h-1zM5 8.500h2v1H5zM9 8.500h2v1H9z" fill="#707070" />
                </Ico>
              </IconBtn>
              <IconBtn label="Frame blending" w="w-[35px]">
                <Ico w={15} h={14} vb="0 0 12 12">
                  <path d="M0 3h1v8h9v1H0zM2 0h10v10H2z" />
                  <path d="M3 1h1v1H3zM3 3h1v1H3zM3 5h1v1H3zM3 7h1v1H3zM10 1h1v1h-1zM10 3h1v1h-1zM10 5h1v1h-1zM10 7h1v1h-1zM5 4.500h4v1H5z" fill="#232323" />
                </Ico>
              </IconBtn>
              <IconBtn label="Motion blur" w="w-[18px]"><Blur s={15} /></IconBtn>
              <IconBtn label="Graph editor" w="w-[49px]">
                <Ico w={16} h={15}><path d="M1.500 2.500h13v11h-13zM4.500 0v3M8.500 0v3M12.500 0v3M4 5c4 0 2 6 8 6" {...line} strokeWidth={1.200} /></Ico>
              </IconBtn>
            </div>
          </div>
          <div className={`${grid} h-5 shrink-0 items-stretch border-y border-black bg-[#2f2f2f] text-[10px] leading-5 text-[#a0a0a0]`}>
            <div className="relative flex items-center gap-1 pl-[5px]"><Eye /><Speaker /><span className="mx-px size-[7px] rounded-full bg-[#b0b0b0]" /><Lock /><ColBar /></div>
            <div className="relative flex items-center pl-[14px]"><Tag /><ColBar /></div>
            <div className="relative pl-[6px]">#<ColBar /></div>
            <div className="relative pl-[6px]">Source Name<ColBar /></div>
            <div className="relative flex items-center gap-[3px] pl-[5px]">
              <Shy /><span className="px-px"><Sun /></span><Dots />
              <i className="pl-[2px] font-['Liberation_Serif',serif] text-[14px] leading-[18px]">fx</i>
              <Film /><Blur /><Adjust /><Cube />
              <ColBar />
            </div>
            <div className="relative pl-[6px]">Parent<ColBar /></div>
          </div>
          {layers.map((l) => (
            <React.Fragment key={l.n}>
              <LayerRow l={l} />
              {l.open && <PropRow />}
            </React.Fragment>
          ))}
        </div>

        <div className="relative flex min-w-0 flex-1 flex-col overflow-hidden">
          <div className="mt-[6px] flex h-[10px] shrink-0 border-y border-black">
            <span className="w-[6px] rounded-l-full bg-[#2d8ceb]" />
            <span className="flex-1 border-x border-black bg-[#666]" />
            <span className="mr-px w-[7px] rounded-r-full bg-[#2d8ceb]" />
          </div>
          <div className="h-5 shrink-0 pl-[6px] pr-2">
            <div className="relative h-full text-[10px] leading-4 text-[#a0a0a0]">
              {Array.from({ length: 15 }, (_, i) => (
                <React.Fragment key={i}>
                  <span className="absolute bottom-px h-[5px] w-px bg-[#7c7c7c]" style={{ left: `${(i / 14) * 100}%` }} />
                  <span className="absolute -translate-x-1/2 whitespace-nowrap pr-[2px]" style={{ left: `${(i / 14) * 100}%` }}>
                    {i === 0 ? "0:00s" : `${String(i).padStart(2, "0")}s`}
                  </span>
                </React.Fragment>
              ))}
            </div>
          </div>
          <div className="flex h-4 shrink-0 border-y border-black">
            <span className="w-[6px] rounded-l-[3px] bg-[#2d8ceb]" />
            <span className="flex-1 border-t border-r border-t-[#747474] border-r-black bg-[#5f5f5f]" />
            <span className="mr-[2px] w-[6px] rounded-r-[3px] bg-[#2d8ceb]" />
          </div>
          <div className="h-1 shrink-0 border-b border-black pl-[6px] pr-2">
            <div className="relative h-[3px]">
              <span className="absolute h-[3px] w-[21%] bg-[#14b81e]" />
              <span className="absolute left-[21.2%] h-[3px] w-[7px] bg-[#14b81e]" />
            </div>
          </div>
          {layers.map((l) => (
            <React.Fragment key={l.n}>
              <div className="h-[17px] shrink-0 border-b border-[#1e1e1e] bg-[#2c2c2c] pl-[6px] pr-2">
                <div className="h-4 bg-[#3b3b3b]">
                  <div
                    className={l.text ? "h-4 border-b border-r border-t border-b-[#632c2c] border-r-[#632c2c] border-t-[#8a4545] bg-[#7b3a3a]" : "h-4 border-b border-b-[#5e5d6d] bg-[#747282]"}
                    style={{ width: l.text ? "29.5%" : "100%" }}
                  />
                </div>
              </div>
              {l.open && (
                <div className="h-[17px] shrink-0 border-b border-[#1e1e1e] bg-[#262626] pl-[6px] pr-2">
                  <div className="relative h-4 bg-[#333]">
                    {l.text ? <><EaseKey x={20.8} /><EaseKey x={28.4} flip /></> : <><LinKey x={85.75} /><LinKey x={92.65} flip /></>}
                  </div>
                </div>
              )}
            </React.Fragment>
          ))}
          <div className="pointer-events-none absolute bottom-0 left-[6px] right-2 top-[6px]">
            <span className="absolute bottom-0 top-0 w-px bg-[#2d8ceb]" style={{ left: "0.5%" }} />
            <span className="absolute top-[15px] -translate-x-1/2" style={{ left: "0.55%" }}>
              <Ico w={12} h={14} c={BLUE}><path d="M0 2l2-1h8l2 1v5l-6 7-6-7z" /><path d="M4 6h4v1H6.500v4h-1V7H4z" fill="#15222f" /></Ico>
            </span>
          </div>
        </div>

        <div className="flex w-4 shrink-0 flex-col items-center border-l border-black bg-[#1b1b1b]">
          <div className="flex h-14 w-full justify-center border-b border-black bg-[#232323] pt-[38px]">
            <Ico w={11} h={14}><path d="M0 0h11v10l-4.500 4h-2L0 10z" /></Ico>
          </div>
          <div className="flex h-[18px] w-full items-center justify-center bg-[#232323]">
            <Ico w={14} h={12}><path d="M5 2h9v8H6z" /><path d="M0 7.500L6.500 .500v7" {...line} strokeWidth={1.200} /><circle cx="6" cy="8.500" r="3" fill="#232323" stroke="#b0b0b0" strokeWidth={1.300} /></Ico>
          </div>
          <div className="h-[84px] w-[14px] rounded-full bg-[#333]" />
        </div>
      </div>
    </section>
  );
}

export default function App() {
  return (
    <div className="flex h-screen min-w-[1500px] cursor-default flex-col overflow-hidden bg-[#171717] font-['DejaVu_Sans_Condensed','DejaVu_Sans',sans-serif] text-[11px] leading-4">
      <Toolbar />
      <main className="flex min-h-0 flex-1 gap-1 pl-px">
        <ProjectPanel />
        <div className="flex min-w-0 flex-1 flex-col gap-1">
          <div className="flex min-h-0 flex-1 gap-1">
            <CompPanel />
            <SidePanel />
          </div>
          <Timeline />
        </div>
      </main>
    </div>
  );
}
